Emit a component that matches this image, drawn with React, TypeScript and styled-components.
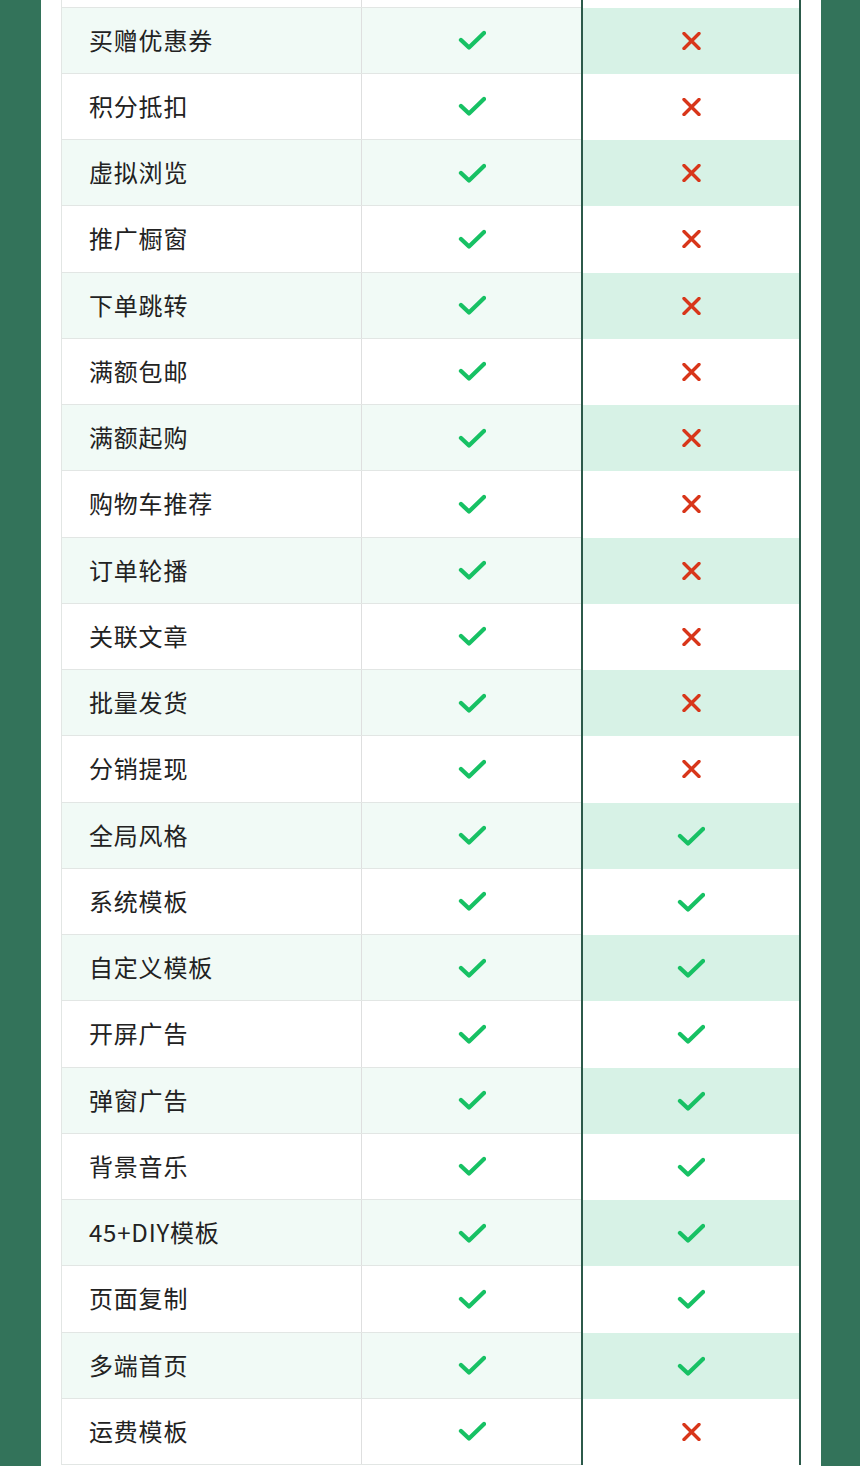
import React from "react";
import styled, { createGlobalStyle } from "styled-components";

type Feature = { name: string; pro: boolean };

const features: Feature[] = [
  { name: "买赠优惠券", pro: false },
  { name: "积分抵扣", pro: false },
  { name: "虚拟浏览", pro: false },
  { name: "推广橱窗", pro: false },
  { name: "下单跳转", pro: false },
  { name: "满额包邮", pro: false },
  { name: "满额起购", pro: false },
  { name: "购物车推荐", pro: false },
  { name: "订单轮播", pro: false },
  { name: "关联文章", pro: false },
  { name: "批量发货", pro: false },
  { name: "分销提现", pro: false },
  { name: "全局风格", pro: true },
  { name: "系统模板", pro: true },
  { name: "自定义模板", pro: true },
  { name: "开屏广告", pro: true },
  { name: "弹窗广告", pro: true },
  { name: "背景音乐", pro: true },
  { name: "45+DIY模板", pro: true },
  { name: "页面复制", pro: true },
  { name: "多端首页", pro: true },
  { name: "运费模板", pro: false },
];

const Check = () => (
  <svg width="28" height="20" viewBox="0 0 28 20">
    <path
      d="M3 10 L11 17.5 L26 3"
      fill="none"
      stroke="#17c164"
      strokeWidth="4.3"
      strokeLinecap="round"
      strokeLinejoin="round"
    />
  </svg>
);

const Cross = () => (
  <svg width="19" height="18" viewBox="0 0 19 18">
    <path
      d="M2 1.5 L17 16.5 M17 1.5 L2 16.5"
      fill="none"
      stroke="#d8361a"
      strokeWidth="3.4"
      strokeLinecap="round"
    />
  </svg>
);

export default function App() {
  return (
    <>
      <GlobalStyle />
      <Page>
        <Panel>
          <Table>
            <Stub>
              <NameCell />
              <MarkCell />
              <ProCell />
            </Stub>
            {features.map((f, index) => (
              <Row key={f.name} $striped={index % 2 === 0}>
                <NameCell>{f.name}</NameCell>
                <MarkCell>
                  <Check />
                </MarkCell>
                <ProCell>{f.pro ? <Check /> : <Cross />}</ProCell>
              </Row>
            ))}
          </Table>
        </Panel>
      </Page>
    </>
  );
}

//Styles
const GlobalStyle = createGlobalStyle`
  body {
    margin: 0;
    background: #33735a;
    font-family: "Noto Sans CJK SC", "Noto Sans", sans-serif;
  }
`;
const Page = styled.div`
  height: 1466px;
  overflow: hidden;
  display: flex;
  padding-left: 41px;
`;
const Panel = styled.div`
  width: 780px;
  background: #fff;
  padding: 0 20px;
  box-sizing: border-box;
`;
const Table = styled.div`
  display: flex;
  flex-direction: column;
  border-left: 1px solid #e2e6e4;
`;
const Row = styled.div<{ $striped?: boolean }>`
  display: grid;
  grid-template-columns: 300px 219px 220px;
  height: 66.25px;
  box-sizing: border-box;
  border-bottom: 1px solid #e2e6e4;
  background: ${(p) => (p.$striped ? "#f1faf6" : "#fff")};

  & > div:last-child {
    background: ${(p) => (p.$striped ? "#d7f2e6" : "#fff")};
  }
`;
const Stub = styled(Row)`
  height: 7.5px;
`;
const NameCell = styled.div`
  display: flex;
  align-items: center;
  padding-left: 27px;
  padding-bottom: 2px;
  font-size: 24px;
  letter-spacing: 0.8px;
  color: #222;
  border-right: 1px solid #dedfdf;
`;
const MarkCell = styled.div`
  display: flex;
  align-items: center;
  justify-content: center;
`;
const ProCell = styled.div`
  display: flex;
  align-items: center;
  justify-content: center;
  border-left: 2px solid #2c5a4a;
  border-right: 2px solid #2c5a4a;
  margin-bottom: -1px;
`;
